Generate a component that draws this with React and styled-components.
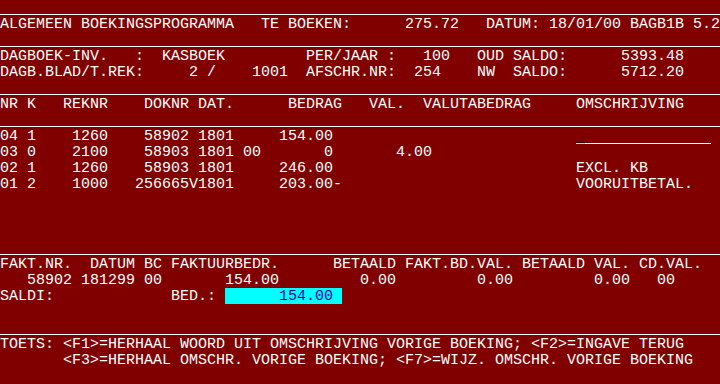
import React from "react";
import styled, { createGlobalStyle } from "styled-components";

const Global = createGlobalStyle`
  html, body { margin: 0; padding: 0; background: #800000; }
  #root { width: 720px; height: 384px; }
`;

const Screen = styled.div`
  width: 720px;
  height: 384px;
  overflow: hidden;
  background: #800000;
  color: #ffffff;
  font-family: "Liberation Mono", "DejaVu Sans Mono", monospace;
  font-size: 15px;
  display: flex;
  flex-direction: column;
`;

const Line = styled.div`
  height: 16px;
  box-sizing: border-box;
  padding-top: 2px;
  line-height: 14px;
  white-space: pre;
  flex: none;
`;

const Rule = styled.div`
  height: 16px;
  box-sizing: border-box;
  padding-top: 14px;
  flex: none;
  &::after {
    content: "";
    display: block;
    height: 1px;
    background: #ffffff;
  }
`;

const Cell = styled.span`
  display: inline-block;
  vertical-align: top;
  box-sizing: border-box;
  height: 16px;
  margin-top: -2px;
  padding-top: 2px;
  line-height: 14px;
  white-space: pre;
`;

const Field = styled(Cell)`
  background: #00ffff;
  color: #0000a8;
`;

const Cursor = styled(Cell)`
  width: 9px;
  background: linear-gradient(
    to bottom,
    transparent 14px,
    #101010 14px,
    #101010 15px,
    #c8c8c8 15px
  );
`;

const Underline = styled(Cell)`
  width: ${(p) => p.$chars * 9}px;
  border-bottom: 1px solid #ffffff;
`;

function cols(parts, width) {
  let s = "";
  for (const [c, t] of parts) {
    while (s.length < c) s += " ";
    s += t;
  }
  if (width) while (s.length < width) s += " ";
  return s;
}

export default function App() {
  return (
    <>
      <Global />
      <Screen>
        <Rule />
        <Line>
          {cols([
            [0, "ALGEMEEN BOEKINGSPROGRAMMA"],
            [29, "TE BOEKEN:"],
            [45, "275.72"],
            [54, "DATUM:"],
            [61, "18/01/00"],
            [70, "BAGB1B"],
            [77, "5.2"],
          ])}
        </Line>
        <Rule />
        <Line>
          {cols([
            [0, "DAGBOEK-INV."],
            [15, ":"],
            [18, "KASBOEK"],
            [34, "PER/JAAR :"],
            [47, "100"],
            [53, "OUD SALDO:"],
            [69, "5393.48"],
          ])}
        </Line>
        <Line>
          {cols([
            [0, "DAGB.BLAD/T.REK:"],
            [21, "2"],
            [23, "/"],
            [28, "1001"],
            [34, "AFSCHR.NR:"],
            [46, "254"],
            [53, "NW  SALDO:"],
            [69, "5712.20"],
          ])}
        </Line>
        <Rule />
        <Line>
          {cols([
            [0, "NR K"],
            [7, "REKNR"],
            [16, "DOKNR"],
            [22, "DAT."],
            [32, "BEDRAG"],
            [41, "VAL."],
            [47, "VALUTABEDRAG"],
            [64, "OMSCHRIJVING"],
          ])}
        </Line>
        <Rule />
        <Line>
          {cols(
            [
              [0, "04 1"],
              [8, "1260"],
              [16, "58902"],
              [22, "1801"],
              [31, "154.00"],
            ],
            64
          )}
          <Cursor />
          <Underline $chars={14} />
        </Line>
        <Line>
          {cols([
            [0, "03 0"],
            [8, "2100"],
            [16, "58903"],
            [22, "1801"],
            [27, "00"],
            [36, "0"],
            [44, "4.00"],
          ])}
        </Line>
        <Line>
          {cols([
            [0, "02 1"],
            [8, "1260"],
            [16, "58903"],
            [22, "1801"],
            [31, "246.00"],
            [64, "EXCL. KB"],
          ])}
        </Line>
        <Line>
          {cols([
            [0, "01 2"],
            [8, "1000"],
            [15, "256665V1801"],
            [31, "203.00-"],
            [64, "VOORUITBETAL."],
          ])}
        </Line>
        <Line />
        <Line />
        <Line />
        <Rule />
        <Line>
          {cols([
            [0, "FAKT.NR."],
            [10, "DATUM"],
            [16, "BC"],
            [19, "FAKTUURBEDR."],
            [37, "BETAALD"],
            [45, "FAKT.BD.VAL."],
            [58, "BETAALD"],
            [66, "VAL."],
            [71, "CD.VAL."],
          ])}
        </Line>
        <Line>
          {cols([
            [3, "58902"],
            [9, "181299"],
            [16, "00"],
            [25, "154.00"],
            [40, "0.00"],
            [53, "0.00"],
            [66, "0.00"],
            [73, "00"],
          ])}
        </Line>
        <Line>
          {cols([[0, "SALDI:"], [19, "BED.:"]], 25)}
          <Field>{"      154.00 "}</Field>
        </Line>
        <Line />
        <Rule />
        <Line>
          {"TOETS: <F1>=HERHAAL WOORD UIT OMSCHRIJVING VORIGE BOEKING; <F2>=INGAVE TERUG"}
        </Line>
        <Line>
          {"       <F3>=HERHAAL OMSCHR. VORIGE BOEKING; <F7>=WIJZ. OMSCHR. VORIGE BOEKING"}
        </Line>
        <Line />
      </Screen>
    </>
  );
}
